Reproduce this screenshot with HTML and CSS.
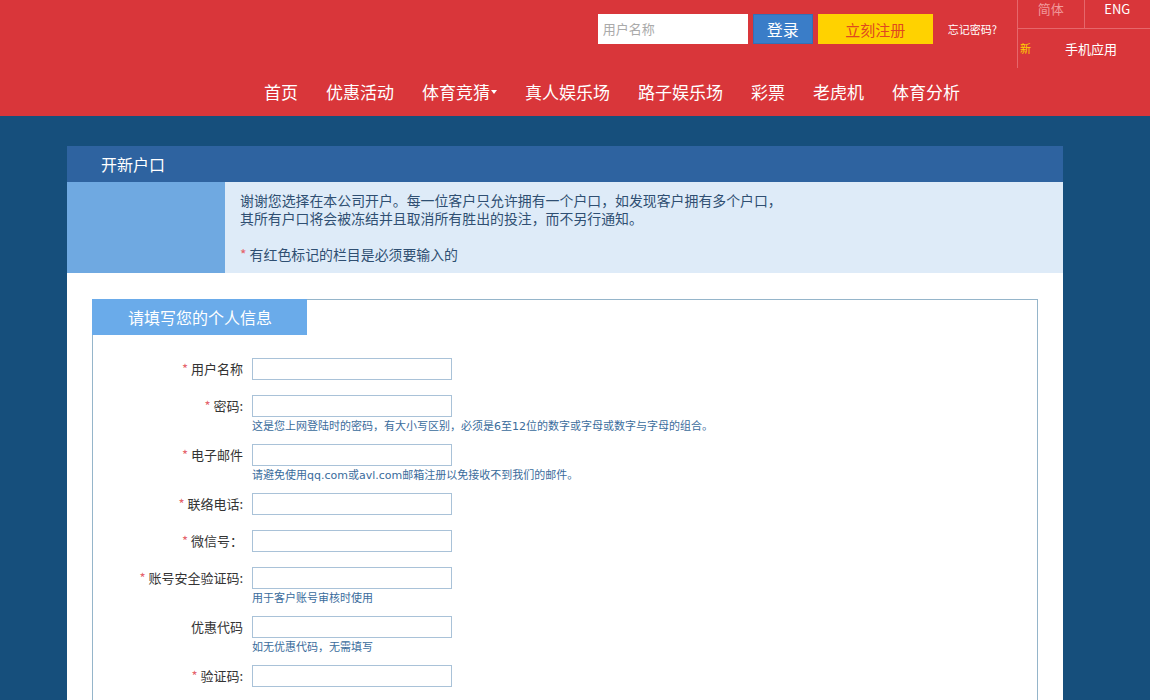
FILE: index.html
```html
<!DOCTYPE html>
<html lang="zh-CN">
<head>
<meta charset="utf-8">
<title>开新户口</title>
<link rel="stylesheet" href="styles.css">
</head>
<body>
<header class="header">
  <div class="topbar">
    <form class="login">
      <input class="login-input" type="text" placeholder="用户名称">
      <button class="btn-login" type="button">登录</button>
      <button class="btn-register" type="button">立刻注册</button>
      <a class="forgot" href="#">忘记密码?</a>
    </form>
    <div class="lang">
      <div class="lang-row">
        <span class="lang-cell lang-off">简体</span>
        <span class="lang-cell">ENG</span>
      </div>
      <div class="mobile">
        <span class="new">新</span>
        <span class="mobile-text">手机应用</span>
      </div>
    </div>
  </div>
  <nav class="nav">
    <a href="#">首页</a>
    <a href="#">优惠活动</a>
    <a href="#">体育竞猜<span class="caret"></span></a>
    <a href="#">真人娱乐场</a>
    <a href="#">路子娱乐场</a>
    <a href="#">彩票</a>
    <a href="#">老虎机</a>
    <a href="#">体育分析</a>
  </nav>
</header>

<main class="container">
  <div class="title-bar">开新户口</div>
  <div class="info">
    <div class="info-side"></div>
    <div class="info-text">
      <p>谢谢您选择在本公司开户。每一位客户只允许拥有一个户口，如发现客户拥有多个户口，<br>其所有户口将会被冻结并且取消所有胜出的投注，而不另行通知。</p>
      <p class="req"><span class="star">*</span> 有红色标记的栏目是必须要输入的</p>
    </div>
  </div>
  <div class="content">
    <div class="box">
      <div class="legend">请填写您的个人信息</div>
      <div class="form">
        <div class="row">
          <label class="label"><span class="star">*</span> 用户名称</label>
          <div class="field"><input type="text"></div>
        </div>
        <div class="row has-hint">
          <label class="label"><span class="star">*</span> 密码:</label>
          <div class="field"><input type="password"><div class="hint">这是您上网登陆时的密码，有大小写区别，必须是6至12位的数字或字母或数字与字母的组合。</div></div>
        </div>
        <div class="row has-hint">
          <label class="label"><span class="star">*</span> 电子邮件</label>
          <div class="field"><input type="text"><div class="hint">请避免使用qq.com或avl.com邮箱注册以免接收不到我们的邮件。</div></div>
        </div>
        <div class="row">
          <label class="label"><span class="star">*</span> 联络电话:</label>
          <div class="field"><input type="text"></div>
        </div>
        <div class="row">
          <label class="label"><span class="star">*</span> 微信号：</label>
          <div class="field"><input type="text"></div>
        </div>
        <div class="row has-hint">
          <label class="label"><span class="star">*</span> 账号安全验证码:</label>
          <div class="field"><input type="text"><div class="hint">用于客户账号审核时使用</div></div>
        </div>
        <div class="row has-hint">
          <label class="label">优惠代码</label>
          <div class="field"><input type="text"><div class="hint">如无优惠代码，无需填写</div></div>
        </div>
        <div class="row">
          <label class="label"><span class="star">*</span> 验证码:</label>
          <div class="field"><input type="text"></div>
        </div>
      </div>
    </div>
  </div>
</main>
</body>
</html>
```

FILE: styles.css
```css
* { box-sizing: border-box; }

body {
  margin: 0;
  background: #164f7c;
  font-family: "Noto Sans CJK SC", "Noto Sans", sans-serif;
  color: #333;
}

a { text-decoration: none; color: inherit; }

.header {
  background: #d9363a;
  height: 116px;
}

.topbar {
  display: flex;
  justify-content: flex-end;
  height: 68px;
}

.login {
  display: flex;
  align-items: flex-start;
  padding-top: 14px;
  margin: 0;
}

.login-input {
  width: 150px;
  height: 30px;
  border: 0;
  padding: 0 5px;
  font: 13px/30px "Noto Sans CJK SC", sans-serif;
  background: #fff;
}
.login-input::placeholder { color: #aaa; }

.btn-login,
.btn-register {
  height: 30px;
  border: 0;
  padding: 0;
  font-family: "Noto Sans CJK SC", sans-serif;
  cursor: pointer;
}

.btn-login {
  width: 60px;
  margin-left: 5px;
  background: #3a7dc8;
  border: 1px solid #3470b5;
  color: #fff;
  font-size: 16px;
}

.btn-register {
  width: 115px;
  margin-left: 5px;
  background: #ffd200;
  color: #e0481f;
  font-size: 15px;
}

.forgot {
  margin-left: 15px;
  color: #fff;
  font-size: 11px;
  line-height: 30px;
}

.lang {
  width: 133px;
  margin-left: 20px;
  border-left: 1px solid #e6676b;
  height: 68px;
}

.lang-row {
  display: flex;
  height: 29px;
  border-bottom: 1px solid #e6676b;
}

.lang-cell {
  flex: 1;
  text-align: center;
  color: #fff;
  font-size: 13px;
  line-height: 18px;
}
.lang-cell:first-child { border-right: 1px solid #e6676b; }
.lang-off { color: #f19a9c; }

.mobile {
  display: flex;
  align-items: center;
  height: 38px;
  padding-left: 2px;
}
.new {
  color: #ffd200;
  font-size: 11px;
}
.mobile-text {
  margin-left: 34px;
  color: #fff;
  font-size: 13px;
}

.nav {
  display: flex;
  align-items: center;
  height: 48px;
  padding-left: 250px;
}
.nav a {
  padding: 0 14px;
  color: #fff;
  font-size: 17px;
  line-height: 24px;
  display: flex;
  align-items: center;
}
.caret {
  display: inline-block;
  margin-left: 1px;
  border-top: 4px solid #fff;
  border-left: 3.5px solid transparent;
  border-right: 3.5px solid transparent;
}

.container {
  width: 996px;
  margin: 30px 0 0 67px;
  background: #fff;
}

.title-bar {
  height: 36px;
  background: #2e63a0;
  color: #fff;
  font-size: 16px;
  line-height: 36px;
  padding-left: 34px;
}

.info {
  display: flex;
  height: 91px;
}
.info-side {
  width: 158px;
  background: #6fa9e1;
}
.info-text {
  flex: 1;
  background: #deebf8;
  padding: 9px 15px 0;
  color: #2f4f72;
  font-size: 13.9px;
  line-height: 18px;
}
.info-text p { margin: 0; }
.info-text .req { margin-top: 18px; }

.star { color: #e5646c; }

.content {
  padding: 26px 25px 40px;
}

.box {
  border: 1px solid #95b5ca;
  min-height: 420px;
}

.legend {
  width: 215px;
  height: 36px;
  margin: -1px 0 0 -1px;
  background: #6aabea;
  color: #fff;
  font-size: 16px;
  line-height: 36px;
  padding-left: 36px;
}

.form {
  padding-top: 23px;
}

.row {
  display: grid;
  grid-template-columns: 150px 200px;
  column-gap: 9px;
  margin-bottom: 15px;
}
.row.has-hint { margin-bottom: 11px; }

.label {
  text-align: right;
  font-size: 13px;
  line-height: 22px;
  color: #333;
  white-space: nowrap;
}

.field input {
  display: block;
  width: 200px;
  height: 22px;
  border: 1px solid #a9c2d8;
  padding: 0 4px;
  background: #fff;
}

.hint {
  margin-top: 4px;
  font-family: "DejaVu Sans", "Noto Sans CJK SC", sans-serif;
  font-size: 11px;
  line-height: 12px;
  color: #3a6c9c;
  white-space: nowrap;
}
```
